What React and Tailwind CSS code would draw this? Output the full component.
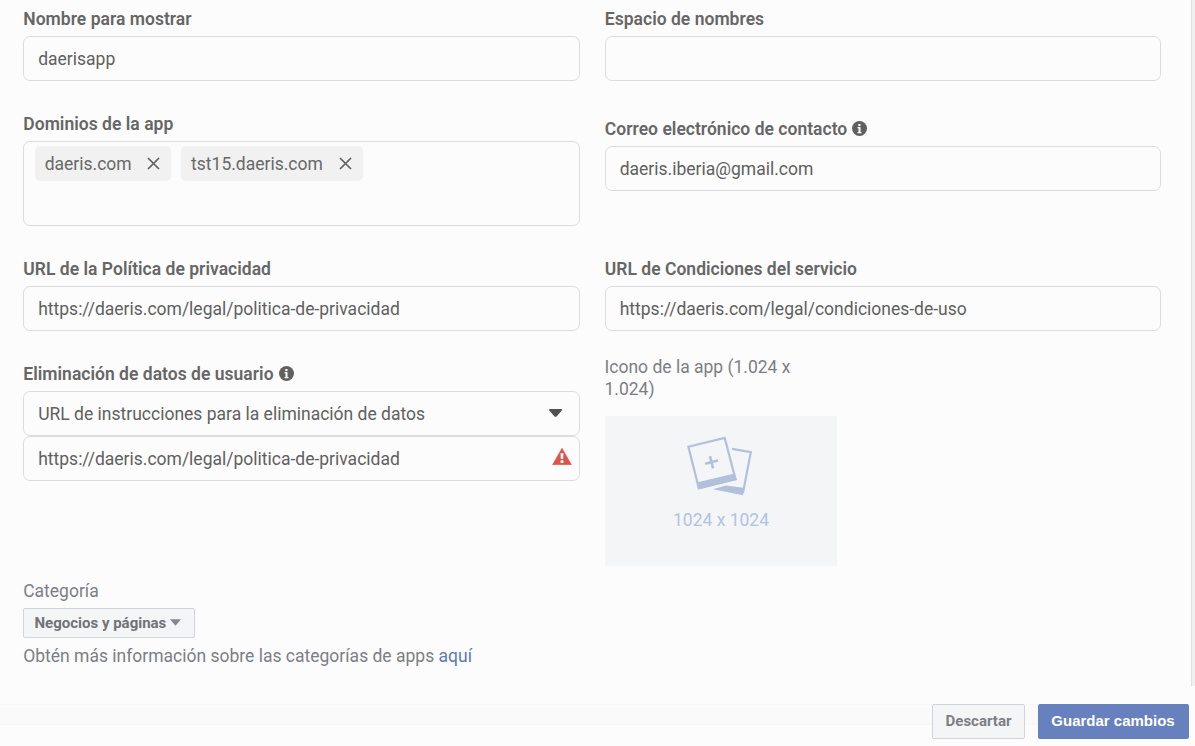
import React from "react";

function InfoIcon() {
  return (
    <svg className="mb-px ml-[5px] h-[15px] w-[15px]" viewBox="0 0 15 15">
      <circle cx="7.5" cy="7.5" r="7.5" fill="#606060" />
      <path d="M6.3 2.9h2.2v2H6.3zM5.5 6h3v5h1v1.2H5.5V11h1V7.2h-1z" fill="#fcfcfc" />
    </svg>
  );
}

function Label({ children, info }) {
  return (
    <div className="mb-1.5 flex h-[22px] items-center pl-[0.3px] text-[17.5px] font-semibold tracking-[0.02px] whitespace-nowrap text-[#666666]">
      {children}
      {info && <InfoIcon />}
    </div>
  );
}

function Field({ children, icon }) {
  return (
    <div className="flex h-[45px] items-center justify-between rounded-[7px] border border-[#dcdcde] pr-[7px] pl-[14.2px] text-[17.5px] whitespace-nowrap text-[#606060]">
      <span>{children}</span>
      {icon}
    </div>
  );
}

function Chip({ children }) {
  return (
    <div className="flex h-[35px] items-center rounded-[5px] bg-[#f1f1f1] pr-[11px] pl-[9.7px] text-[17.5px] text-[#686868]">
      {children}
      <svg className="ml-[15.7px] h-[13px] w-[13px]" viewBox="0 0 13 13">
        <path d="M1 1l11 11M12 1L1 12" stroke="#606060" strokeWidth="1.7" />
      </svg>
    </div>
  );
}

function PhotosIcon() {
  return (
    <svg className="mr-0.5 h-[60px] w-[66px]" viewBox="0 0 66 60" fill="none" stroke="#b3c0dc" strokeWidth="2.2">
      <path d="M45 12.8l18.8 3.4-7.9 41" />
      <path d="M25.8 53.2l13-3.8 17.7 2.4-.5 7.4z" fill="#b3c0dc" stroke="none" />
      <path d="M1.4 10.8L37.7 1.9l10.8 41.2-36.7 9z" />
      <path d="M9.5 46.6l38.2-9.2L50 44l-38.8 9.6z" fill="#b3c0dc" stroke="none" />
      <path d="M18.2 27.8l12.8-3.2M22.9 20.1l3.2 12.3" strokeWidth="2.6" />
    </svg>
  );
}

export default function App() {
  return (
    <div
      className="flex h-[746px] w-[1195px] flex-col overflow-hidden bg-[#fcfcfc] text-[17.5px] leading-[22px]"
      style={{ fontFamily: "Roboto, sans-serif" }}
    >
      <div className="flex h-[686px]">
        <main className="flex w-[1191px] shrink-0 flex-col pt-2 pl-[23px]">
          <div className="flex h-[572px] gap-[24.5px]">
            <section className="w-[557px]">
              <Label>Nombre para mostrar</Label>
              <Field>daerisapp</Field>
              <div className="h-8" />
              <Label>Dominios de la app</Label>
              <div className="flex h-[85px] items-start gap-[10px] rounded-[7px] border border-[#dcdcde] px-[11px] py-1">
                <Chip>daeris.com</Chip>
                <Chip>tst15.daeris.com</Chip>
              </div>
              <div className="h-8" />
              <Label>URL de la Política de privacidad</Label>
              <Field>https://daeris.com/legal/politica-de-privacidad</Field>
              <div className="h-8" />
              <Label info>Eliminación de datos de usuario</Label>
              <Field
                icon={
                  <svg className="mr-[10.5px] mb-px h-2 w-[13px]" viewBox="0 0 13 8">
                    <path d="M1.2 0h10.6c1.1 0 1.5 1.1.8 1.8L7.8 7.2c-.7.8-1.8.8-2.5 0L.5 1.8C-.2 1.1.1 0 1.2 0z" fill="#505050" />
                  </svg>
                }
              >
                URL de instrucciones para la eliminación de datos
              </Field>
              <Field
                icon={
                  <svg className="mb-1 h-[17px] w-5" viewBox="0 0 20 17">
                    <path d="M10 .2L19.5 16.8H.5z" fill="#dc5449" stroke="#dc5449" strokeWidth=".5" strokeLinejoin="round" />
                    <path d="M8.5 5.2h3l-.4 5.8H8.9zM8.6 12.3h2.8v2.6H8.6z" fill="#fff" />
                  </svg>
                }
              >
                https://daeris.com/legal/politica-de-privacidad
              </Field>
            </section>
            <section className="w-[556.5px]">
              <Label>Espacio de nombres</Label>
              <Field />
              <div className="h-[37px]" />
              <Label info>Correo electrónico de contacto</Label>
              <Field>daeris.iberia@gmail.com</Field>
              <div className="h-[67px]" />
              <Label>URL de Condiciones del servicio</Label>
              <Field>https://daeris.com/legal/condiciones-de-uso</Field>
              <div className="mt-[25px] w-[232px] text-[#7c7e84]">
                Icono de la app (1.024 x
                <br />
                1.024)
              </div>
              <div className="mt-4 flex h-[150px] w-[232px] flex-col items-center bg-[#f4f5f7] pt-5">
                <PhotosIcon />
                <div className="mt-[13px] pl-px text-[#b0c3e2]">1024 x 1024</div>
              </div>
            </section>
          </div>
          <div className="text-[#7c7e84]">
            <div className="pl-[0.2px]">Categoría</div>
            <button className="mt-1.5 flex h-[30px] w-[172px] items-center rounded-[2px] border border-[#d0d4dc] bg-[#f4f5f7] pl-[10.5px] text-[15px] font-bold whitespace-nowrap text-[#707277]">
              Negocios y páginas
              <svg className="mb-px ml-1 h-[7px] w-[11px]" viewBox="0 0 11 7">
                <path d="M0 .3h11L5.5 6.7z" fill="#85878c" />
              </svg>
            </button>
            <div className="mt-[7px] pl-[0.2px]">
              Obtén más información sobre las categorías de apps <a className="text-[#6078b4]">aquí</a>
            </div>
          </div>
        </main>
        <div className="w-1 border-l border-[#dfdfdf] bg-[#f0f0f0]" />
      </div>
      <footer className="mt-[18px] flex h-[35px]">
        <div className="h-[21px] w-[932px] border-y border-[#f6f6f7] bg-[#fafafa]" />
        <button className="flex h-[35px] w-[93px] items-center justify-center rounded-[2px] border border-[#d0d4dc] bg-[#f4f5f7] pb-px text-[15px] font-bold text-[#7c7e84]">
          Descartar
        </button>
        <div className="h-[21px] w-[13px] border-y border-[#f6f6f7] bg-[#fafafa]" />
        <button className="flex h-[35px] w-[151px] items-center justify-center rounded-[2px] bg-[#6681be] pr-px pb-0.5 font-['Liberation_Sans',sans-serif] text-[15px] font-bold whitespace-nowrap text-white">
          Guardar cambios
        </button>
      </footer>
    </div>
  );
}
